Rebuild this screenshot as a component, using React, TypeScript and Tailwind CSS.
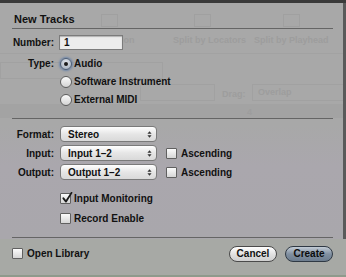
import React from "react";

const font = { fontFamily: '"Liberation Sans", Arial, sans-serif' };

function Radio({ checked }: { checked?: boolean }) {
  return (
    <span
      className={`relative w-[12px] h-[12px] rounded-full border flex items-center justify-center shrink-0 ${
        checked
          ? "border-[#4d5f78] bg-[radial-gradient(circle_at_50%_35%,#e4e8ee,#9aa6b6)] shadow-[0_0_2px_1px_rgba(70,110,170,0.6)]"
          : "border-[#5e5e5e] bg-[linear-gradient(#fafafa,#d4d4d4)]"
      }`}
    >
      {checked && <span className="w-[4px] h-[4px] rounded-full bg-[#1c1c1c]" />}
    </span>
  );
}

function Check({ checked }: { checked?: boolean }) {
  return (
    <span className="relative w-[11px] h-[11px] border border-[#606060] rounded-[1px] bg-[linear-gradient(#fbfbfb,#d6d6d6)] shrink-0">
      {checked && (
        <svg viewBox="0 0 11 11" className="absolute -top-[2px] left-0 w-[12px] h-[12px]">
          <path d="M2.2 5.8 L4.6 8.8 L9.6 0.8" fill="none" stroke="#1a1a1a" strokeWidth="1.7" strokeLinecap="round" strokeLinejoin="round" />
        </svg>
      )}
    </span>
  );
}

function Popup({ value }: { value: string }) {
  return (
    <div className="w-[97px] h-[16px] rounded-[4px] border border-[#7a7a7a] bg-[linear-gradient(#ffffff,#e6e6e6_50%,#d9d9d9)] flex items-center pl-[7px] pr-[4px] text-[10px] font-bold text-[#111]">
      <span className="flex-1">{value}</span>
      <svg viewBox="0 0 6 10" className="w-[5px] h-[9px]">
        <path d="M0.5 4 L3 1 L5.5 4 Z M0.5 6 L3 9 L5.5 6 Z" fill="#333" />
      </svg>
    </div>
  );
}

function Ghost() {
  // faint toolbar of the arrange window behind the sheet
  return (
    <div className="absolute inset-0 text-[9px] font-bold text-[#9d9d9d] pointer-events-none">
      <div className="absolute left-0 right-0 top-[53px] h-px bg-[#a2a2a2]" />
      <div className="absolute left-0 right-0 top-[104px] h-[14px] bg-[#a3a3a3]" />
      <span className="absolute left-[102px] top-[34px]">Section</span>
      <span className="absolute left-[173px] top-[34px]">Split by Locators</span>
      <span className="absolute left-[254px] top-[34px]">Split by Playhead</span>
      <div className="absolute left-[101px] top-[14px] w-[17px] h-[13px] border border-[#a0a0a0]" />
      <div className="absolute left-[194px] top-[14px] w-[17px] h-[13px] border border-[#a0a0a0]" />
      <div className="absolute left-[283px] top-[14px] w-[17px] h-[13px] border border-[#a0a0a0]" />
      <div className="absolute left-0 top-[62px] w-[163px] h-[17px] border border-[#a1a1a1]" />
      <div className="absolute left-[140px] top-[84px] w-[75px] h-[17px] border border-[#a1a1a1]" />
      <span className="absolute left-[222px] top-[88px]">Drag:</span>
      <div className="absolute left-[252px] top-[84px] w-[94px] h-[17px] border border-[#a1a1a1] pl-[5px] leading-[15px]">Overlap</div>
      <span className="absolute left-[247px] top-[106px]">4</span>
    </div>
  );
}

export default function App() {
  return (
    <div
      className="relative w-[346px] h-[277px] overflow-hidden bg-[linear-gradient(#a8a8a8,#a8a8a8_45%,#aaa7ad_60%,#a9a7ac_85%)] text-[#111]"
      style={font}
    >
      <Ghost />
      <div className="absolute right-0 top-0 w-[3px] h-full bg-[#5a5a5a]" />
      <div className="absolute left-0 right-0 bottom-0 h-[38px] bg-[#a7a9a5]" />
      <div className="absolute left-0 right-0 bottom-0 h-[2px] bg-[#8f9a8c]" />

      <div className="relative flex flex-col">
        <div className="h-[3px] bg-[#3a3a3a]" />
        <div className="pl-[12px] pr-[13px]">
          <div className="pl-[2px] pt-[10px] h-[25px] text-[11px] font-bold leading-[13px]">New Tracks</div>
          <div className="h-px bg-[#656565]" />

          {/* number + type */}
          <div className="flex items-center gap-[5px] mt-[6px] h-[15px]">
            <span className="w-[42px] text-right text-[10px] font-bold">Number:</span>
            <div className="w-[64px] h-[15px] border border-[#7b7b7b] bg-[#ececec] shadow-[inset_0_1px_1px_rgba(0,0,0,0.25)] pl-[4px] text-[10px] font-bold leading-[13px]">
              1
            </div>
          </div>
          <div className="flex gap-[6px] mt-[8px]">
            <span className="w-[42px] text-right text-[10px] font-bold leading-[12px]">Type:</span>
            <div className="flex flex-col gap-[6px]">
              <label className="flex items-center gap-[2px] text-[10px] font-bold leading-[12px]">
                <Radio checked /> Audio
              </label>
              <label className="flex items-center gap-[2px] text-[10px] font-bold leading-[12px]">
                <Radio /> Software Instrument
              </label>
              <label className="flex items-center gap-[2px] text-[10px] font-bold leading-[12px]">
                <Radio /> External MIDI
              </label>
            </div>
          </div>
          <div className="h-px bg-[#656565] mt-[12px]" />

          {/* routing */}
          <div className="flex flex-col gap-[3px] mt-[7px]">
            <div className="flex items-center gap-[6px]">
              <span className="w-[42px] text-right text-[10px] font-bold">Format:</span>
              <Popup value="Stereo" />
            </div>
            <div className="flex items-center gap-[6px]">
              <span className="w-[42px] text-right text-[10px] font-bold">Input:</span>
              <Popup value="Input 1–2" />
              <label className="flex items-center gap-[4px] ml-[3px] text-[10px] font-bold">
                <Check /> Ascending
              </label>
            </div>
            <div className="flex items-center gap-[6px]">
              <span className="w-[42px] text-right text-[10px] font-bold">Output:</span>
              <Popup value="Output 1–2" />
              <label className="flex items-center gap-[4px] ml-[3px] text-[10px] font-bold">
                <Check /> Ascending
              </label>
            </div>
          </div>
          <div className="flex flex-col gap-[9px] mt-[13px] pl-[48px]">
            <label className="flex items-center gap-[3px] text-[10px] font-bold leading-[11px]">
              <Check checked /> Input Monitoring
            </label>
            <label className="flex items-center gap-[3px] text-[10px] font-bold leading-[11px]">
              <Check /> Record Enable
            </label>
          </div>
          <div className="h-px bg-[#656565] mt-[13px]" />

          {/* footer */}
          <div className="flex items-center mt-[7px] h-[17px]">
            <label className="flex items-center gap-[4px] text-[10px] font-bold">
              <Check /> Open Library
            </label>
            <div className="ml-auto flex gap-[8px]">
              <button className="w-[48px] h-[16px] rounded-full border border-[#4a4a4a] bg-[linear-gradient(#ffffff,#e2e2e2_50%,#cfcfcf)] text-[10px] font-bold leading-[14px] text-[#111]">
                Cancel
              </button>
              <button className="w-[48px] h-[16px] rounded-full border border-[#2f3944] bg-[linear-gradient(#c3ccd6,#8190a1_50%,#6c7c8e)] text-[10px] font-bold leading-[14px] text-[#0c0c0c]">
                Create
              </button>
            </div>
          </div>
        </div>
      </div>
    </div>
  );
}
